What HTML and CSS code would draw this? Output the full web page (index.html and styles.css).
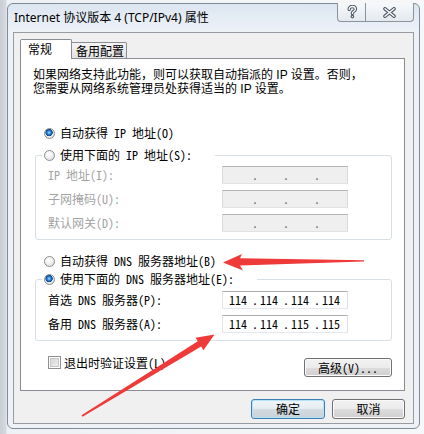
FILE: index.html
```html
<!DOCTYPE html>
<html>
<head>
<meta charset="utf-8">
<link rel="stylesheet" href="styles.css">
</head>
<body>
<div class="desk">
  <div class="window">
    <div class="titlebar">
      <span class="title">Internet 协议版本 4 (TCP/IPv4) 属性</span>
      <div class="caps">
        <span class="cap cap-help">
          <svg width="12" height="14" viewBox="0 0 12 14">
            <path d="M3.2 4.4 C3.2 2.4 4.6 1.5 6.3 1.5 C8.2 1.5 9.4 2.7 9.4 4.2 C9.4 6.1 6.6 6.3 6.4 8.2 L6.4 8.6" fill="none" stroke="#4f5866" stroke-width="3.4" stroke-linecap="round"/>
            <path d="M3.2 4.4 C3.2 2.4 4.6 1.5 6.3 1.5 C8.2 1.5 9.4 2.7 9.4 4.2 C9.4 6.1 6.6 6.3 6.4 8.2 L6.4 8.6" fill="none" stroke="#ffffff" stroke-width="1.3" stroke-linecap="round"/>
            <circle cx="6.4" cy="11.6" r="1.8" fill="#4f5866"/>
            <circle cx="6.4" cy="11.6" r="0.7" fill="#ffffff"/>
          </svg>
        </span>
        <span class="cap cap-close">
          <svg width="13" height="11" viewBox="0 0 13 11">
            <path d="M2 1.8 L11 9.2 M11 1.8 L2 9.2" fill="none" stroke="#4f5866" stroke-width="3.6" stroke-linecap="round"/>
            <path d="M2 1.8 L11 9.2 M11 1.8 L2 9.2" fill="none" stroke="#ffffff" stroke-width="1.4" stroke-linecap="round"/>
          </svg>
        </span>
      </div>
    </div>
    <div class="client">
      <div class="tabs">
        <div class="tab active">常规</div>
        <div class="tab inactive">备用配置</div>
      </div>
      <div class="panel">
        <p class="intro">如果网络支持此功能，则可以获取自动指派的 IP 设置。否则，<br>您需要从网络系统管理员处获得适当的 IP 设置。</p>
        <div class="opt first"><span class="radio on"></span><span>自动获得 IP 地址(O)</span></div>
        <fieldset class="group g1">
          <legend class="legend l1"><span class="opt"><span class="radio"></span><span>使用下面的 IP 地址(S):</span></span></legend>
          <div class="row dis"><span class="lbl">IP 地址(I):</span><span class="ip off"><span class="oct"></span><span class="dot">.</span><span class="oct"></span><span class="dot">.</span><span class="oct"></span><span class="dot">.</span><span class="oct"></span></span></div>
          <div class="row dis"><span class="lbl">子网掩码(U):</span><span class="ip off"><span class="oct"></span><span class="dot">.</span><span class="oct"></span><span class="dot">.</span><span class="oct"></span><span class="dot">.</span><span class="oct"></span></span></div>
          <div class="row dis"><span class="lbl">默认网关(D):</span><span class="ip off"><span class="oct"></span><span class="dot">.</span><span class="oct"></span><span class="dot">.</span><span class="oct"></span><span class="dot">.</span><span class="oct"></span></span></div>
        </fieldset>
        <div class="opt dns-auto"><span class="radio"></span><span>自动获得 DNS 服务器地址(B)</span></div>
        <fieldset class="group g2">
          <legend class="legend l2"><span class="opt"><span class="radio on"></span><span>使用下面的 DNS 服务器地址(E):</span></span></legend>
          <div class="row"><span class="lbl">首选 DNS 服务器(P):</span><span class="ip"><span class="oct">114</span><span class="dot">.</span><span class="oct">114</span><span class="dot">.</span><span class="oct">114</span><span class="dot">.</span><span class="oct">114</span></span></div>
          <div class="row"><span class="lbl">备用 DNS 服务器(A):</span><span class="ip"><span class="oct">114</span><span class="dot">.</span><span class="oct">114</span><span class="dot">.</span><span class="oct">115</span><span class="dot">.</span><span class="oct">115</span></span></div>
        </fieldset>
        <div class="foot">
          <div class="check"><span class="box"></span><span>退出时验证设置(L)</span></div>
          <span class="btn adv">高级(V)...</span>
        </div>
      </div>
      <div class="actions">
        <span class="btn default ok">确定</span>
        <span class="btn cancel">取消</span>
      </div>
    </div>
  </div>
  <svg class="arrows" width="424" height="434" viewBox="0 0 424 434">
    <polygon points="223,262.5 242,254 240,258.3 364,260.2 364,261.4 240,265.6 243,270.5" fill="#ef3a3a"/>
    <polygon points="214.5,334.5 195.6,337.8 197.8,341.3 81.5,415.3 82.5,416.8 201.2,346.5 203.4,350.2" fill="#ef3a3a"/>
  </svg>
</div>
</body>
</html>
```

FILE: styles.css
```css
* { box-sizing: border-box; }

html, body {
  margin: 0;
  padding: 0;
}

body {
  width: 424px;
  height: 434px;
  overflow: hidden;
  font-family: "Noto Sans Mono CJK SC", "Noto Sans CJK SC", monospace;
  font-size: 12px;
  color: #000;
  background: #eef0f2;
}

.desk {
  position: relative;
  width: 424px;
  height: 434px;
  padding: 3px 0 0 7px;
  background: linear-gradient(to right, #c9ced4 0, #d6dadf 6px, #eef1f4 7px, #f6f7f8 100%);
}

.window {
  width: 413px;
  height: 426px;
  border: 1px solid #7f8b98;
  border-radius: 6px;
  background: linear-gradient(#dce6f1 0, #edf2f7 28px, #eef2f7 100%);
  padding: 0 5px 4px 5px;
  display: flex;
  flex-direction: column;
}

.titlebar {
  height: 28px;
  display: flex;
  justify-content: space-between;
  align-items: flex-start;
  padding-left: 1px;
}

.title {
  font-family: "Noto Sans", "Noto Sans CJK SC", sans-serif;
  font-size: 12px;
  line-height: 16px;
  margin-top: 6px;
  color: #000;
}

.caps {
  display: flex;
  margin-top: -1px;
}

.cap {
  height: 19px;
  border: 1px solid #8d939b;
  border-top: none;
  background: linear-gradient(#f7f9fb, #e4e9ef);
  display: flex;
  align-items: center;
  justify-content: center;
}

.cap-help {
  width: 28px;
  border-right: none;
  border-radius: 0 0 0 4px;
}

.cap-close {
  width: 49px;
  border-radius: 0 0 4px 0;
}

.client {
  height: 392px;
  border: 1px solid #979ca3;
  background: #f0f0f0;
  padding: 6px 8px 4px 6px;
  display: flex;
  flex-direction: column;
}

.tabs {
  display: flex;
  align-items: flex-end;
  height: 19px;
}

.tab {
  font-family: "Noto Sans CJK SC", sans-serif;
  font-size: 12px;
  line-height: 14px;
  border: 1px solid #898c95;
  border-bottom: none;
}

.tab.active {
  position: relative;
  z-index: 1;
  width: 52px;
  height: 20px;
  margin-bottom: -1px;
  background: #fff;
  padding: 2px 0 0 7px;
  border-radius: 2px 2px 0 0;
}

.tab.inactive {
  width: 55px;
  height: 16px;
  border-left: none;
  background: linear-gradient(#f4f4f4, #e2e2e2);
  padding: 1px 0 0 4px;
  border-radius: 0 2px 0 0;
}

.panel {
  flex: 1;
  border: 1px solid #898c95;
  background: #fff;
}

.intro {
  margin: 9px 0 0 12px;
  font-family: "Liberation Sans", "Noto Sans CJK SC", sans-serif;
  line-height: 14px;
  white-space: nowrap;
}

.opt {
  display: flex;
  align-items: center;
  gap: 5px;
  height: 16px;
  line-height: 16px;
  white-space: nowrap;
}

.first {
  margin: 29px 0 0 23px;
}

.dns-auto {
  margin: 13px 0 0 23px;
}

.radio {
  flex: none;
  width: 11px;
  height: 11px;
  border-radius: 50%;
  border: 1px solid #8b8d8f;
  background: radial-gradient(circle at 40% 35%, #ffffff 0, #f1f1f1 45%, #d2d4d6 100%);
}

.radio.on {
  background:
    radial-gradient(circle at 45% 40%, #b8e8ff 0, #3d95e4 1.4px, #0f5cb0 2.8px, #0a3f80 3.4px, rgba(255,255,255,0) 3.9px),
    radial-gradient(circle at 40% 35%, #ffffff 0, #f1f1f1 45%, #d2d4d6 100%);
}

.group {
  border: 1px solid #d5dfe5;
  border-radius: 3px;
  min-width: 0;
  margin: 0 12px 0 14px;
  padding: 3px 0 7px 6px;
}

.g1 { margin-top: 6px; }

.g2 {
  margin-top: 2px;
  padding-top: 4px;
}

.legend {
  padding: 0 0 0 2px;
  height: 16px;
}

.l1 { width: 173px; }
.l2 { width: 215px; }

.row {
  display: flex;
  align-items: center;
  height: 18px;
  padding-left: 6px;
  white-space: nowrap;
}

.row + .row { margin-top: 6px; }

.lbl {
  width: 174px;
  line-height: 16px;
}

.row.dis .lbl { color: #a3a3a3; }

.ip {
  width: 126px;
  height: 18px;
  display: flex;
  padding-left: 3px;
  line-height: 16px;
  background: #fff;
  border: 1px solid;
  border-color: #abadb3 #dbdfe6 #e3e9ef #e2e3ea;
}

.ip.off {
  background: #efefef;
  border-color: #b3b3b3 #d9d9d9 #e2e2e2 #d9d9d9;
}

.oct {
  width: 24px;
  text-align: center;
}

.dot {
  width: 7px;
  text-indent: 2px;
}

.ip.off .dot { color: #6a6a6a; }

.foot {
  display: flex;
  justify-content: space-between;
  align-items: flex-start;
  margin: 17px 12px 0 27px;
}

.check {
  display: flex;
  align-items: center;
  gap: 3px;
  height: 13px;
  line-height: 13px;
  margin-top: -2px;
  white-space: nowrap;
}

.box {
  flex: none;
  width: 13px;
  height: 13px;
  border: 1px solid #8e8f8f;
  background: linear-gradient(135deg, #cdcdcd, #f6f6f6);
  box-shadow: inset 0 0 0 1px #fff, inset 0 0 0 2px #c4c6c8;
}

.btn {
  display: flex;
  align-items: center;
  justify-content: center;
  border: 1px solid #707070;
  border-radius: 3px;
  background: linear-gradient(#f2f2f2 0, #ebebeb 50%, #dddddd 50%, #cfcfcf 100%);
  box-shadow: inset 0 0 0 1px #fbfbfb;
  line-height: 14px;
  white-space: nowrap;
}

.adv {
  width: 88px;
  height: 19px;
}

.actions {
  display: flex;
  justify-content: flex-end;
  gap: 7px;
  margin-top: 8px;
}

.ok {
  width: 74px;
  height: 20px;
}

.cancel {
  width: 73px;
  height: 20px;
}

.btn.default {
  border-color: #3c7fb1;
  background: linear-gradient(#f0f5f8 0, #e5ecf1 50%, #d4dce2 50%, #c9d2d9 100%);
  box-shadow: inset 0 0 0 1px #b6e2f7;
}

.arrows {
  position: absolute;
  left: 0;
  top: 0;
  pointer-events: none;
}
```
